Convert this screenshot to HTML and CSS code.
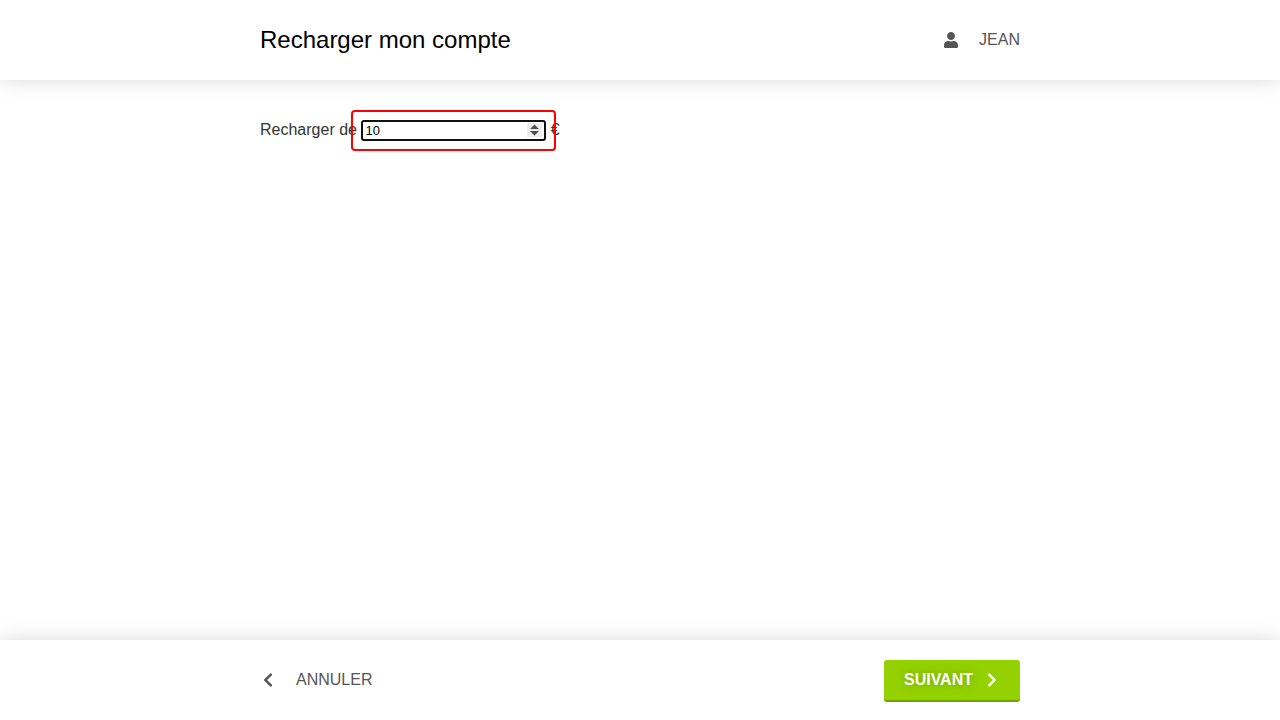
FILE: index.html
```html
<!DOCTYPE html>
<html lang="fr">
<head>
<meta charset="utf-8">
<meta name="viewport" content="width=device-width, initial-scale=1">
<title>Recharger mon compte</title>
<link rel="stylesheet" href="styles.css">
</head>
<body>
<header class="bar bar-top">
  <div class="container bar-content">
    <h1 class="title">Recharger mon compte</h1>
    <a class="link" href="#compte">
      <svg class="icon" viewBox="0 0 448 512" aria-hidden="true"><path fill="currentColor" d="M224 256c70.7 0 128-57.3 128-128S294.7 0 224 0 96 57.3 96 128s57.3 128 128 128zm89.6 32h-16.7c-22.2 10.2-46.9 16-72.9 16s-50.6-5.8-72.9-16h-16.7C60.2 288 0 348.2 0 422.4V464c0 26.5 21.5 48 48 48h352c26.5 0 48-21.5 48-48v-41.6c0-74.2-60.2-134.4-134.4-134.4z"/></svg>
      <span>JEAN</span>
    </a>
  </div>
</header>
<main class="main">
  <form class="container" id="recharge">
    <label for="montant">Recharger de</label>
    <span class="highlight"><input class="amount" id="montant" type="number" value="10" autofocus></span>
    €
  </form>
</main>
<footer class="bar bar-bottom">
  <div class="container bar-content">
    <a class="link" href="#annuler">
      <svg class="icon" viewBox="0 0 320 512" aria-hidden="true"><path fill="currentColor" d="M34.52 239.03L228.87 44.69c9.37-9.37 24.57-9.37 33.94 0l22.67 22.67c9.36 9.36 9.37 24.52.04 33.9L131.49 256l154.02 154.75c9.34 9.38 9.32 24.54-.04 33.9l-22.67 22.67c-9.37 9.37-24.57 9.37-33.94 0L34.52 272.97c-9.37-9.37-9.37-24.57 0-33.94z"/></svg>
      <span>ANNULER</span>
    </a>
    <button class="button" type="submit" form="recharge">
      <span>SUIVANT</span>
      <svg class="icon" viewBox="0 0 320 512" aria-hidden="true"><path fill="currentColor" d="M285.476 272.971L91.132 467.314c-9.373 9.373-24.569 9.373-33.941 0l-22.667-22.667c-9.357-9.357-9.375-24.522-.04-33.901L188.505 256 34.484 101.255c-9.335-9.379-9.317-24.544.04-33.901l22.667-22.667c9.373-9.373 24.569-9.373 33.941 0L285.475 239.03c9.373 9.372 9.373 24.568.001 33.941z"/></svg>
    </button>
  </div>
</footer>
</body>
</html>
```
FILE: styles.css
```css
* {
  box-sizing: border-box;
}

body {
  display: flex;
  flex-direction: column;
  min-height: 100vh;
  margin: 0;
  background: #fff;
  color: #333;
  font: 16px/20px "Liberation Sans", Arial, sans-serif;
}

.container {
  width: 100%;
  max-width: 800px;
  margin: 0 auto;
  padding: 0 20px;
}

.bar {
  height: 80px;
  background: #fff;
  box-shadow: 0 0 20px rgba(0, 0, 0, 0.15);
}

.bar-content {
  display: flex;
  align-items: center;
  justify-content: space-between;
  height: 100%;
}

.title {
  margin: 0;
  color: #000;
  font-size: 24px;
  font-weight: 400;
  line-height: 40px;
}

.link {
  display: flex;
  align-items: center;
  gap: 20px;
  color: #555;
  text-decoration: none;
}

.icon {
  width: 16px;
  height: 16px;
}

.main {
  flex: 1;
  padding: 40px 0;
}

.highlight {
  position: relative;
  display: inline-block;
}

.highlight::after {
  content: "";
  position: absolute;
  inset: -10px;
  border: 2px solid #f00;
  border-radius: 4px;
  pointer-events: none;
}

.amount {
  width: 185px;
  height: 21px;
  font: 13px "Liberation Sans", Arial, sans-serif;
  caret-color: transparent;
}

.amount::-webkit-inner-spin-button {
  appearance: none;
  width: 15px;
  height: 14px;
  background: #efefef url("data:image/svg+xml,%3Csvg xmlns='http://www.w3.org/2000/svg' viewBox='0 0 15 14'%3E%3Cpath fill='%23505050' d='M3 6 7.5 1.5 12 6zM3 8l4.500 4.500L12 8z'/%3E%3C/svg%3E") center / 15px 14px no-repeat;
  opacity: 1;
}

.button {
  display: flex;
  align-items: center;
  gap: 11px;
  height: 42px;
  margin-top: 2px;
  padding: 0 20px;
  border: 0;
  border-bottom: 2px solid #6ca300;
  border-radius: 3px;
  background: #94d100;
  color: #fff;
  font: bold 16px/20px "Liberation Sans", Arial, sans-serif;
  text-shadow: 0 0 10px #6ca300;
}

.button .icon {
  opacity: 0.9;
}
```
